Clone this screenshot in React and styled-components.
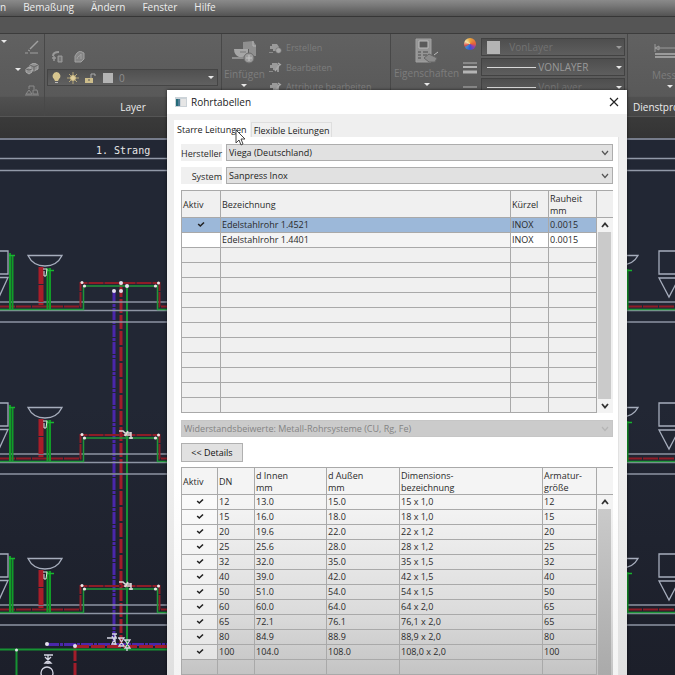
import React from 'react';
import styled, {createGlobalStyle} from 'styled-components';

const GlobalStyle = createGlobalStyle`
    * {
        box-sizing: border-box;
    }
    body {
        margin: 0;
        overflow: hidden;
        background: #222734;
        font-family: "Open Sans", "Noto Sans", sans-serif;
    }
`
const Workspace = styled.div`
    position: relative;
    display: flex;
    flex-direction: column;
    height: 100vh;
    overflow: hidden;
`
const MenuBar = styled.nav`
    display: flex;
    gap: 17px;
    height: 17px;
    overflow: hidden;
    background: linear-gradient(#8a8a8a, #7a7a7a 30%, #545454 92%, #363636 93%);
`
const MenuLink = styled.a`
    font-size: 10px;
    line-height: 15px;
    color: #ededed;
    text-decoration: none;
    white-space: nowrap;
`
const TabStrip = styled.div`
    height: 17px;
    background: #555;
    border-bottom: 1px solid #3c3c3c;
`
const Ribbon = styled.header`
    display: flex;
    height: 82px;
    overflow: hidden;
    background: linear-gradient(#616161, #595959 76%, #505050 77%, #464646);
`
const RibbonPanel = styled.section`
    display: flex;
    flex-direction: column;
    justify-content: space-between;
    flex: none;
    width: ${props => props.$width}px;
    border-right: 1px solid #484848;
`
const PanelBody = styled.div`
    display: flex;
    flex-direction: ${props => props.$column ? 'column' : 'row'};
    gap: ${props => props.$gap || 0}px;
    height: 64px;
    padding: ${props => props.$pad || '4px 3px'};
    overflow: hidden;
`
const PanelTitle = styled.h2`
    margin: 0;
    padding: 0 5px;
    font-size: 10px;
    font-weight: 400;
    line-height: 18px;
    color: #ededed;
    text-align: ${props => props.$left ? 'left' : 'center'};
`
const ToolStack = styled.div`
    display: flex;
    flex-direction: column;
    justify-content: space-between;
    align-items: ${props => props.$align || 'flex-start'};
    flex: ${props => props.$grow ? 1 : 'none'};
`
const ToolButton = styled.button`
    display: flex;
    flex-direction: ${props => props.$big ? 'column' : 'row'};
    align-items: center;
    gap: ${props => props.$big ? 2 : 4}px;
    flex: none;
    padding: 0;
    border: none;
    background: none;
    font-family: inherit;
    font-size: ${props => props.$big ? 10 : 9}px;
    line-height: 16px;
    color: #7d7d7d;
    white-space: nowrap;
`
const ToolRow = styled.div`
    display: flex;
    gap: 11px;
    padding: 10px 0 0 5px;
`
const LayerBox = styled.button`
    display: flex;
    align-items: center;
    gap: 6px;
    height: 17px;
    padding: 0 3px 0 4px;
    border: 1px solid #454545;
    background: linear-gradient(#505050, #606060);
    font-family: inherit;
    font-size: 10px;
    color: #8d8d8d;
`
const Spacer = styled.span`
    flex: 1;
`
const Caret = styled.span`
    width: 0;
    border: 3px solid transparent;
    border-top-color: ${props => props.$dim ? '#999' : '#e8e8e8'};
    border-bottom: none;
`
const Swatch = styled.span`
    width: ${props => props.$large ? 13 : 10}px;
    height: ${props => props.$large ? 13 : 10}px;
    background: #b4b4b4;
`
const ColorWheel = styled.span`
    width: 12px;
    height: 12px;
    border-radius: 50%;
    background: conic-gradient(#e9a53a, #e35d3c 90deg, #8c3fb5 130deg, #3355d4 180deg, #3c8bd0 230deg, #d84b4b 250deg, #f3e4ab 300deg, #e9a53a);
`
const StyleStack = styled.div`
    display: flex;
    flex-direction: column;
    flex: 1;
    gap: 2px;
`
const StyleBox = styled.button`
    display: flex;
    align-items: center;
    gap: ${props => props.$gap}px;
    flex: none;
    height: 18px;
    padding: 0 2px 0 5px;
    border: 1px solid #424242;
    background: linear-gradient(#4e4e4e, #5e5e5e);
    font-family: inherit;
    font-size: 10px;
    color: ${props => props.$dim ? '#727272' : '#999'};
`
const LineSample = styled.span`
    width: 49px;
    height: 1px;
    margin-right: 2px;
    background: #d8d8d8;
`
const DocStrip = styled.div`
    height: 22px;
    background: linear-gradient(#3a3a3a, #343434);
    border-top: 1px solid #555;
`
const Canvas = styled.main`
    flex: 1;
    min-height: 0;
    background: linear-gradient(#222734 50%, #1c1f2a);
`
const Drawing = styled.svg`
    display: block;
    width: 100%;
    height: 100%;
`
const Dialog = styled.div`
    position: absolute;
    top: 90px;
    right: 48px;
    left: 167px;
    background: linear-gradient(#efefef 60%, #dcdcdc);
    box-shadow: 0 0 3px rgba(0, 0, 0, 0.6);
    color: #2a2a2a;
`
const TitleBar = styled.header`
    display: flex;
    align-items: center;
    gap: 4px;
    height: 24px;
    padding: 0 8px;
    background: #fff;
`
const DialogTitle = styled.h1`
    flex: 1;
    margin: 0;
    font-size: 10px;
    font-weight: 400;
    line-height: 16px;
    color: #222;
`
const CloseButton = styled.button`
    display: flex;
    padding: 0;
    border: none;
    background: none;
`
const Tabs = styled.div`
    display: flex;
    align-items: flex-end;
    gap: 1px;
    padding: 6px 7px 0;
`
const Tab = styled.button`
    height: ${props => props.$active ? 17 : 15}px;
    padding: 0 2px;
    border: 1px solid ${props => props.$active ? '#fff' : '#dedede'};
    border-bottom: none;
    background: ${props => props.$active ? '#fff' : '#f0f0f0'};
    font-family: inherit;
    font-size: 9px;
    line-height: 13px;
    color: #222;
`
const TabPage = styled.div`
    margin: 0 8px 0 7px;
    padding: 7px 5px 20px 7px;
    background: linear-gradient(#fff 60%, #f0f0f0);
    border-right: 1px solid #e2e2e2;
`
const Field = styled.div`
    display: flex;
    gap: 4px;
    margin: ${props => props.$spaced ? 7 : 0}px 0 6px;
`
const FieldLabel = styled.label`
    width: 41px;
    height: 17px;
    background: #f0f0f0;
    font-size: 9px;
    line-height: 20px;
    text-align: right;
`
const SelectBox = styled.div`
    position: relative;
    flex: 1;
`
const Select = styled.select`
    display: block;
    width: 100%;
    height: 17px;
    padding: 0 2px;
    appearance: none;
    border: 1px solid #adadad;
    border-radius: 0;
    background: #e1e1e1;
    font-family: inherit;
    font-size: 9px;
    line-height: 14px;
    color: #222;
    opacity: 1;
    &:disabled {
        border-color: #c6c6c6;
        background: #cbcbcb;
        color: #838383;
    }
`
const SelectArrow = styled.span`
    position: absolute;
    top: 6px;
    right: 4px;
    display: flex;
    pointer-events: none;
`
const DetailsButton = styled.button`
    display: block;
    width: 62px;
    height: 19px;
    margin: 5px 0;
    padding: 0;
    border: 1px solid #b0b0b0;
    background: #e1e1e1;
    font-family: inherit;
    font-size: 9px;
    color: #111;
`
const Grid = styled.div`
    display: flex;
    background: ${props => props.$shaded ? 'linear-gradient(#f4f4f4 15%, #dcdcdc 60%, #b8b8b8)' : '#f0f0f0'};
    border-top: 1px solid #a9a9a9;
    border-left: 1px solid #a9a9a9;
`
const Table = styled.table`
    flex: 1;
    width: 0;
    border-collapse: separate;
    border-spacing: 0;
    table-layout: fixed;
    font-size: 9px;
`
const HeadCell = styled.th`
    height: 27px;
    padding: 2px 2px 0 1px;
    border-right: 1px solid #a9a9a9;
    border-bottom: 1px solid #a9a9a9;
    font-weight: 400;
    line-height: 12px;
    text-align: left;
    white-space: pre-line;
`
const Cell = styled.td`
    height: 15px;
    padding: 0 1px;
    border-right: 1px solid #a9a9a9;
    border-bottom: 1px solid #a9a9a9;
    background: ${props => props.$fill || 'transparent'};
    line-height: 14px;
    text-align: ${props => props.$center ? 'center' : 'left'};
    white-space: nowrap;
`
const ScrollBar = styled.div`
    display: flex;
    flex-direction: column;
    flex: none;
    width: 16px;
`
const ScrollHead = styled.div`
    height: 27px;
    border-bottom: 1px solid #a9a9a9;
`
const ScrollButton = styled.button`
    display: flex;
    align-items: center;
    justify-content: center;
    height: 14px;
    padding: 0;
    border: none;
    background: #f3f3f3;
`
const ScrollTrack = styled.div`
    flex: 1;
    margin: 0 2px 0 1px;
    background: ${props => props.$shaded ? 'linear-gradient(#cacaca, #a4a4a4)' : '#cacaca'};
`
const Pointer = styled.svg`
    position: absolute;
    top: 39px;
    left: 68px;
`

const pipes = [
    ['✓', 'Edelstahlrohr 1.4521', 'INOX', '0.0015'],
    ['', 'Edelstahlrohr 1.4401', 'INOX', '0.0015']
];

const dimensions = [
    ['12', '13.0', '15.0', '15 x 1,0', '12'],
    ['15', '16.0', '18.0', '18 x 1,0', '15'],
    ['20', '19.6', '22.0', '22 x 1,2', '20'],
    ['25', '25.6', '28.0', '28 x 1,2', '25'],
    ['32', '32.0', '35.0', '35 x 1,5', '32'],
    ['40', '39.0', '42.0', '42 x 1,5', '40'],
    ['50', '51.0', '54.0', '54 x 1,5', '50'],
    ['60', '60.0', '64.0', '64 x 2,0', '65'],
    ['65', '72.1', '76.1', '76,1 x 2,0', '65'],
    ['80', '84.9', '88.9', '88,9 x 2,0', '80'],
    ['100', '104.0', '108.0', '108,0 x 2,0', '100']
];

const Chevron = ({up, color = '#555'}) => (
    <svg width="8" height="6" viewBox="0 0 8 6" fill="none" stroke={color} strokeWidth={up === undefined ? 1.2 : 1.8}>
        <path d={up ? 'M1 5 4 1.5 7 5' : 'M1 1 4 4.5 7 1'} />
    </svg>
);

const Check = () => (
    <svg width="8" height="7" viewBox="0 0 8 7" fill="none" stroke="#222" strokeWidth="1.6">
        <path d="M1.2 3 3.3 5 7 1.5" />
    </svg>
);

const InsertIcon = () => (
    <svg width="25" height="24" viewBox="0 0 25 24">
        <path d="M11 2 21 1 24 5V16H17V9H11Z" fill="#8f8f8f" />
        <path d="M21 1v5h3" fill="none" stroke="#b5b5b5" />
        <path d="M2 9H16V14Q14 17 10 17H7Q2 15 2 9Z" fill="#a6a6a6" />
        <path d="M0 18h12M8 12h6" stroke="#8f8f8f" strokeWidth="2" />
        <circle cx="17" cy="18" r="5" fill="#9c9c9c" stroke="#6a6a6a" />
        <path d="M17 15v6M14 18h6" stroke="#c4c4c4" />
    </svg>
);

const BlockIcon = ({edit}) => (
    <svg width="13" height="11" viewBox="0 0 13 11">
        <path d="M3 1h5l2 3v2H7v2H4V6H1V3h2z" fill="#9a9a9a" />
        <path d="M0 9.500h4" stroke="#8a8a8a" />
        {edit
            ? <path d="M6 9l5-7M9 1l3 2M9 6v4" stroke="#a8a8a8" strokeWidth="1.500" />
            : <circle cx="9.500" cy="7.500" r="2.800" fill="#a8a8a8" stroke="#666" strokeWidth=".6" />}
    </svg>
);

const LayerIcon = () => (
    <svg width="11" height="12" viewBox="0 0 11 12" fill="none" stroke="#999">
        <path d="M1 5Q1 1 7 1" strokeWidth="2" />
        <path d="M2 5v5M0 7h4" strokeWidth="1.500" />
        <path d="M6 5h4v6H6z" fill="#858585" />
        <path d="M7 7h2M7 9h2" stroke="#666" />
    </svg>
);

const CopyIcon = () => (
    <svg width="11" height="12" viewBox="0 0 11 12" fill="#858585" stroke="#a2a2a2">
        <path d="M3 2 6 0l4 2v6l-3 3H1V5z" />
        <path d="M3 8c0-3 4-3 4-5v5" fill="none" />
    </svg>
);

const PenIcon = () => (
    <svg width="14" height="14" viewBox="0 0 14 14" fill="none" stroke="#a0a0a0">
        <path d="M13 1 5 9" strokeWidth="1.5" />
        <path d="M0 13h3M5 13h8M3 10l2 1" />
    </svg>
);

const CubesIcon = () => (
    <svg width="14" height="12" viewBox="0 0 14 12" fill="#909090" stroke="#acacac">
        <path d="M5 2 9 0l4 2v4L9 8 5 6zM1 6l3-2 3 2v3l-3 2-3-2z" />
        <path d="M5 2l4 2 4-2M9 4v4M1 6l3 1 3-1" fill="none" stroke="#666" />
    </svg>
);

const ArrayIcon = () => (
    <svg width="14" height="12" viewBox="0 0 14 12" fill="none" stroke="#8b8b8b">
        <path d="M4 5V2h5v3M1 10l3-4 3 4zM8 10V6h4l1 4zM0 11h14" />
    </svg>
);

const BulbIcon = () => (
    <svg width="9" height="12" viewBox="0 0 9 12">
        <path d="M4.500 0a4 4 0 0 1 2.500 7l-1 2H3L2 7A4 4 0 0 1 4.500 0z" fill="#d8c68f" />
        <path d="M3 10h3v1H3z" fill="#bbb" />
    </svg>
);

const SunIcon = () => (
    <svg width="12" height="12" viewBox="0 0 12 12" stroke="#cbb982">
        <path d="M6 0v12M0 6h12M2 2l8 8M10 2l-8 8" strokeWidth=".8" />
        <circle cx="6" cy="6" r="2.500" fill="#e0cf9e" />
    </svg>
);

const LockIcon = () => (
    <svg width="12" height="12" viewBox="0 0 12 12" fill="none">
        <path d="M6 6V2h4v2" stroke="#aaa" />
        <path d="M0 6h8v5H0z" fill="#cdbd8b" />
        <path d="M3 8h2" stroke="#555" />
    </svg>
);

const PropertiesIcon = () => (
    <svg width="25" height="25" viewBox="0 0 25 25" fill="none" stroke="#a0a0a0">
        <path d="M2 1h15v23H2z" fill="#959595" />
        <path d="M5 3h9v7H5z" fill="#5a5a5a" stroke="#bbb" />
        <path d="M4 14h3M4 17h3M4 20h3M9 14h5M9 17h4" stroke="#4c4c4c" />
        <path d="M10 20l5-4 8 4-2 4h-6z" fill="#8b8b8b" stroke="#666" />
        <path d="M20 17l4-3" stroke="#bbb" />
    </svg>
);

const WeightIcon = () => (
    <svg width="14" height="13" viewBox="0 0 14 13" stroke="#b5b5b5">
        <path d="M0 2h14" />
        <path d="M0 6h14" strokeWidth="2" />
        <path d="M0 11h14" strokeWidth="3" />
    </svg>
);

const MeasureIcon = () => (
    <svg width="32" height="26" viewBox="0 0 32 26" fill="none" stroke="#9b9b9b">
        <path d="M1 5v8M1 9h31M1 9l4-2v4z" />
        <path d="M1 15h31M1 18h31" strokeWidth="2" />
    </svg>
);

const AppIcon = () => (
    <svg width="12" height="10" viewBox="0 0 12 10">
        <path d="M0 0h12v10H0z" fill="#ccd3d8" />
        <path d="M1 2h4v7H1z" fill="#246b78" />
        <path d="M6 2h5v7H6z" fill="#e6e6e6" />
        <path d="M3 2h2v7H3z" fill="#507e96" />
    </svg>
);

// one storey of the riser diagram, y is the offset from the topmost one
const Storey = ({y, top}) => (
    <g transform={`translate(0 ${y})`} fill="none">
        <g stroke="#a6adbc" strokeWidth="1.300">
            <path d="M0 302H675M0 310.500H675M0 322H675" stroke="#8d94a3" />
            <path d="M-16 251H8V274H-16ZM-10 277.500H8L-1 297Z" />
            <path d="M659 251H684V274H659ZM659 278H679L669 297Z" />
            <path d="M28 255.500H62Q57 266 45 266T28 255.500Z" />
            <path d="M604 255.500H638Q633 265 621 265" />
        </g>
        <path d="M41 267V305" stroke="#a91d29" strokeWidth="5" strokeDasharray="17 1" />
        <path d="M0 306.500H80.500V283H159.500V306.500H167M627 306.500H675" stroke="#8f1c27" strokeWidth="2" strokeDasharray="15 1" />
        <path d="M0 309.500H83.500V286H157.500V309.500H167M627 309.500H675" stroke="#20963a" strokeWidth="1.500" />
        <path d="M10 253V309M12.500 255V309M47.500 268V309M50 268V309M627.500 269V309" stroke="#119c28" strokeWidth="2" />
        <path d="M9 255.500H15M46 270.500H54M627 270.500H632" stroke="#17b52e" strokeWidth="1.500" />
        <path d="M43 269h4l-1 7h-2v-5" stroke="#e2e5df" />
        <g fill="#f0e7e7">
            <circle cx="82" cy="282.500" r="1.500" />
            <circle cx="84.500" cy="286" r="1.600" />
            <circle cx="155.500" cy="286" r="1.600" />
            <circle cx="158.500" cy="283" r="1.500" />
        </g>
        {!top && <path d="M119 279h4l2 2h6M124 283h7M128 279l-3 5M131 280v7M129 286h4" stroke="#ddd7d7" strokeWidth="1.500" />}
    </g>
);

const RiserDiagram = () => (
    <Drawing viewBox="0 138 675 537" preserveAspectRatio="xMinYMin slice">
        <path d="M0 139H675M0 158.500H675M0 170.500H675" stroke="#9299a8" strokeWidth="1.500" />
        <text x="96" y="154" fontFamily="DejaVu Sans Mono, monospace" fontSize="10" fill="#e8e8e8">1. Strang</text>
        <path d="M114 291V642M47 644.500H167" stroke="#4a27ab" strokeWidth="3" strokeDasharray="12 1 3 1" />
        <path d="M121 283V644M75 646.500H167M75 647V675" stroke="#a21d2a" strokeWidth="3" strokeDasharray="14 2" />
        <path d="M127 286V650M0 649.500H167M16.500 650V675" stroke="#169333" strokeWidth="2" />
        <Storey y={0} top />
        <Storey y={152} />
        <Storey y={303} />
        <g fill="none" stroke="#d4d5e2" strokeWidth="1.300">
            <path d="M107 638h10M112 634h5M112 636l4 8h-4l4-8M115 634v11" />
            <path d="M118 638h6l-5 8h5l-5-8M124 640h6l-5 8h5l-5-8M127 648v3" />
            <path d="M44 655h9M45 657l6 6h-6l6-6M48 655v9" />
            <circle cx="47" cy="673" r="6" />
        </g>
        <g fill="#e6e0ee">
            <circle cx="121" cy="283" r="2" />
            <circle cx="127" cy="286" r="2" />
            <circle cx="114" cy="291" r="2" />
            <circle cx="121" cy="291" r="2" />
            <circle cx="47" cy="644" r="2" />
            <circle cx="75" cy="646" r="2" />
            <circle cx="16.500" cy="650" r="1.500" />
        </g>
    </Drawing>
);

const Scroll = ({shaded, down}) => (
    <ScrollBar>
        <ScrollHead />
        <ScrollButton type="button" aria-label="Nach oben"><Chevron up color="#333" /></ScrollButton>
        <ScrollTrack $shaded={shaded} />
        {down && <ScrollButton type="button" aria-label="Nach unten"><Chevron up={false} color="#333" /></ScrollButton>}
    </ScrollBar>
);

const PipeTable = () => {
    const rows = [...pipes, ...Array(11).fill(['', '', '', ''])];
    const fills = ['#9cb8d9', '#fff'];
    return (
        <Grid>
            <Table>
                <colgroup>
                    <col width="39" />
                    <col />
                    <col width="38" />
                    <col width="48" />
                </colgroup>
                <thead>
                    <tr>
                        <HeadCell>Aktiv</HeadCell>
                        <HeadCell>Bezeichnung</HeadCell>
                        <HeadCell>Kürzel</HeadCell>
                        <HeadCell>{'Rauheit\nmm'}</HeadCell>
                    </tr>
                </thead>
                <tbody>
                    {rows.map((row, i) => (
                        <tr key={i}>
                            {row.map((value, j) => (
                                <Cell key={j} $center={j === 0} $fill={i === 1 && j === 1 ? '#f4f4f4' : fills[i]}>
                                    {value === '✓' ? <Check /> : value}
                                </Cell>
                            ))}
                        </tr>
                    ))}
                </tbody>
            </Table>
            <Scroll down />
        </Grid>
    );
};

const DimensionTable = () => {
    const rows = [...dimensions, ...Array(3).fill(['', '', '', '', ''])];
    return (
        <Grid $shaded>
            <Table>
                <colgroup>
                    <col width="36" />
                    <col width="37" />
                    <col width="72" />
                    <col width="73" />
                    <col />
                    <col width="54" />
                </colgroup>
                <thead>
                    <tr>
                        <HeadCell>Aktiv</HeadCell>
                        <HeadCell>DN</HeadCell>
                        <HeadCell>{'d Innen\nmm'}</HeadCell>
                        <HeadCell>{'d Außen\nmm'}</HeadCell>
                        <HeadCell>{'Dimensions-\nbezeichnung'}</HeadCell>
                        <HeadCell>{'Armatur-\ngröße'}</HeadCell>
                    </tr>
                </thead>
                <tbody>
                    {rows.map((row, i) => (
                        <tr key={i}>
                            <Cell $center $fill={row[0] && 'rgba(255, 255, 255, 0.5)'}>{row[0] && <Check />}</Cell>
                            {row.map((value, j) => <Cell key={j}>{value}</Cell>)}
                        </tr>
                    ))}
                </tbody>
            </Table>
            <Scroll shaded />
        </Grid>
    );
};

const RibbonBar = () => (
    <Ribbon>
        <RibbonPanel $width={45}>
            <PanelBody $gap={2} $pad="6px 5px 2px 1px">
                <ToolStack $grow>
                    <ToolButton type="button" aria-label="Linie"><Caret /></ToolButton>
                </ToolStack>
                <ToolStack $align="flex-end">
                    <ToolButton type="button" aria-label="Stift"><PenIcon /></ToolButton>
                    <ToolButton type="button" aria-label="Körper"><Caret /><CubesIcon /></ToolButton>
                    <ToolButton type="button" aria-label="Anordnung"><ArrayIcon /></ToolButton>
                </ToolStack>
            </PanelBody>
        </RibbonPanel>
        <RibbonPanel $width={177}>
            <PanelBody $column $gap={6} $pad="7px 3px 0 2px">
                <ToolRow>
                    <ToolButton type="button" aria-label="Layereigenschaften"><LayerIcon /></ToolButton>
                    <ToolButton type="button" aria-label="Layer kopieren"><CopyIcon /></ToolButton>
                </ToolRow>
                <LayerBox type="button">
                    <BulbIcon />
                    <SunIcon />
                    <LockIcon />
                    <Swatch />
                    0
                    <Spacer />
                    <Caret />
                </LayerBox>
            </PanelBody>
            <PanelTitle>Layer</PanelTitle>
        </RibbonPanel>
        <RibbonPanel $width={169}>
            <PanelBody $gap={4} $pad="6px 2px 3px">
                <ToolButton type="button" $big><InsertIcon />Einfügen<Caret /></ToolButton>
                <ToolStack>
                    <ToolButton type="button"><BlockIcon />Erstellen</ToolButton>
                    <ToolButton type="button"><BlockIcon edit />Bearbeiten</ToolButton>
                    <ToolButton type="button"><BlockIcon edit />Attribute bearbeiten</ToolButton>
                </ToolStack>
            </PanelBody>
        </RibbonPanel>
        <RibbonPanel $width={237}>
            <PanelBody $gap={4} $pad="4px 2px 0 3px">
                <ToolButton type="button" $big><PropertiesIcon />Eigenschaften<Caret /></ToolButton>
                <ToolStack $align="center">
                    <ColorWheel />
                    <WeightIcon />
                    <WeightIcon />
                </ToolStack>
                <StyleStack>
                    <StyleBox type="button" $gap={9} $dim><Swatch $large />VonLayer<Spacer /><Caret $dim /></StyleBox>
                    <StyleBox type="button" $gap={0}><LineSample />VONLAYER<Spacer /><Caret /></StyleBox>
                    <StyleBox type="button" $gap={0} $dim><LineSample />VonLayer<Spacer /><Caret /></StyleBox>
                </StyleStack>
            </PanelBody>
        </RibbonPanel>
        <RibbonPanel $width={90}>
            <PanelBody $pad="5px 24px">
                <ToolButton type="button" $big><MeasureIcon />Messen<Caret /></ToolButton>
            </PanelBody>
            <PanelTitle $left>Dienstprogramme</PanelTitle>
        </RibbonPanel>
    </Ribbon>
);

const PipeDialog = () => (
    <Dialog role="dialog" aria-labelledby="dialogTitle">
        <TitleBar>
            <AppIcon />
            <DialogTitle id="dialogTitle">Rohrtabellen</DialogTitle>
            <CloseButton type="button" aria-label="Schließen">
                <svg width="10" height="10" viewBox="0 0 10 10" stroke="#222" strokeWidth="1.200">
                    <path d="M1 1l8 8M9 1L1 9" />
                </svg>
            </CloseButton>
        </TitleBar>
        <Tabs role="tablist">
            <Tab type="button" role="tab" aria-selected="true" $active>Starre Leitungen</Tab>
            <Tab type="button" role="tab" aria-selected="false">Flexible Leitungen</Tab>
        </Tabs>
        <TabPage>
            <Field>
                <FieldLabel htmlFor="hersteller">Hersteller</FieldLabel>
                <SelectBox>
                    <Select id="hersteller"><option>Viega (Deutschland)</option></Select>
                    <SelectArrow><Chevron /></SelectArrow>
                </SelectBox>
            </Field>
            <Field>
                <FieldLabel htmlFor="system">System</FieldLabel>
                <SelectBox>
                    <Select id="system"><option>Sanpress Inox</option></Select>
                    <SelectArrow><Chevron /></SelectArrow>
                </SelectBox>
            </Field>
            <PipeTable />
            <Field $spaced>
                <SelectBox>
                    <Select disabled aria-label="Widerstandsbeiwerte">
                        <option>Widerstandsbeiwerte: Metall-Rohrsysteme (CU, Rg, Fe)</option>
                    </Select>
                    <SelectArrow><Chevron color="#b5b5b5" /></SelectArrow>
                </SelectBox>
            </Field>
            <DetailsButton type="button">&lt;&lt; Details</DetailsButton>
            <DimensionTable />
        </TabPage>
        <Pointer width="12" height="18" viewBox="0 0 12 18" fill="#fff" stroke="#444">
            <path d="M1 1v13l3-3 2 5 2-1-2-5h4z" />
        </Pointer>
    </Dialog>
);

const App = () => (
    <Workspace>
        <GlobalStyle />
        <MenuBar>
            <MenuLink href="#zeichnen">n</MenuLink>
            <MenuLink href="#bemassung">Bemaßung</MenuLink>
            <MenuLink href="#aendern">Ändern</MenuLink>
            <MenuLink href="#fenster">Fenster</MenuLink>
            <MenuLink href="#hilfe">Hilfe</MenuLink>
        </MenuBar>
        <TabStrip />
        <RibbonBar />
        <DocStrip />
        <Canvas>
            <RiserDiagram />
        </Canvas>
        <PipeDialog />
    </Workspace>
);

export default App;
